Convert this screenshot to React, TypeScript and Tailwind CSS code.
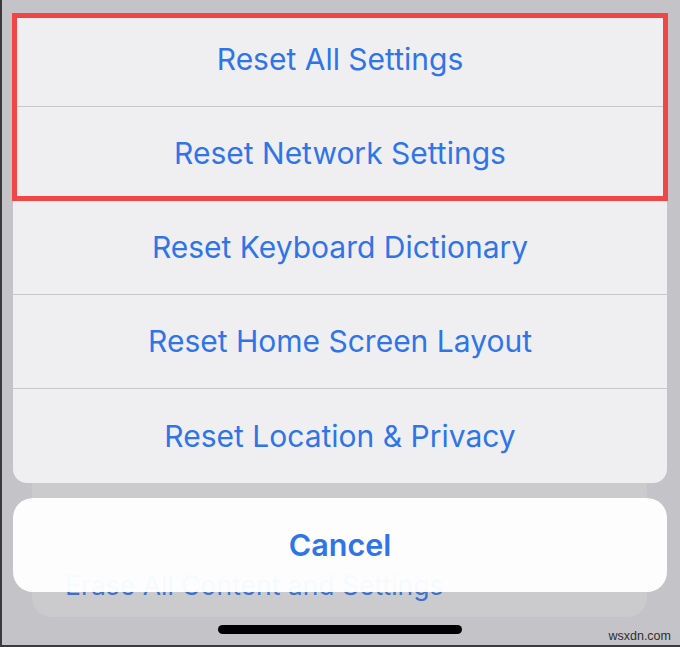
import React from "react";

const options = [
  "Reset All Settings",
  "Reset Network Settings",
  "Reset Keyboard Dictionary",
  "Reset Home Screen Layout",
  "Reset Location & Privacy",
];

export default function App() {
  return (
    <div className="relative h-[647px] w-[680px] overflow-hidden border-b-2 border-l-2 border-[#3a3a3c] bg-[#c4c4c8] font-['Inter',sans-serif]">
      {/* sheet behind, mostly hidden */}
      <div className="absolute left-[30px] right-[33px] top-[440px] bottom-[28px] flex items-end rounded-[20px] bg-[#cbcbcd] px-[33px] pb-[16px]">
        <span className="text-[26.5px] leading-[32px] text-[#3b72cf]">Erase All Content and Settings</span>
      </div>

      <div className="relative flex flex-col pl-[11px] pr-[13px] pt-[13px]">
        <div className="flex flex-col divide-y divide-[#c8c8cc] overflow-hidden rounded-[14px] bg-[#efeff1]">
          {options.map((label) => (
            <div key={label} className="flex h-[94px] items-center justify-center">
              <span className="text-[30px] text-[#2f74e8]">{label}</span>
            </div>
          ))}
        </div>

        <div className="mt-[15px] flex h-[94px] items-center justify-center rounded-[20px] bg-white/[0.96]">
          <span className="text-[30.5px] font-semibold text-[#2f74e8]">Cancel</span>
        </div>
      </div>

      {/* highlight */}
      <div className="absolute left-[10px] top-[13px] h-[188px] w-[656px] border-[5px] border-[#f04646]" />

      <div className="absolute left-[216px] top-[625px] h-[9px] w-[244px] rounded-full bg-black" />

      <span className="absolute right-[9px] top-[629px] font-['Liberation_Sans',sans-serif] text-[12.5px] leading-[14px] text-[#2e2e2e]">
        wsxdn.com
      </span>
    </div>
  );
}
